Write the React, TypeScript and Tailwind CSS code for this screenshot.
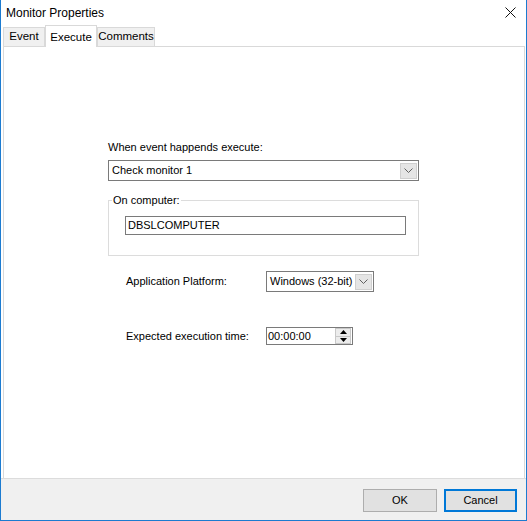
import React from 'react'

const FONT = { fontFamily: '"Liberation Sans", Arial, sans-serif' }

function Chevron() {
  return (
    <svg width="9" height="6" viewBox="0 0 9 6" fill="none" stroke="#606060" strokeWidth="1">
      <path d="M0.5 0.5L4.5 4.5L8.5 0.5" />
    </svg>
  )
}

function ComboArrow() {
  return (
    <div className="flex h-[16px] w-[17px] items-center justify-center border border-[#cfcfcf] bg-[#e5e5e5]">
      <Chevron />
    </div>
  )
}

function Combo({ value, className }: { value: string; className: string }) {
  return (
    <div className={`flex h-[21px] items-center justify-between border border-[#7a7a7a] bg-white pl-[3px] pr-[1px] ${className}`}>
      <span className="text-[11px] text-black">{value}</span>
      <ComboArrow />
    </div>
  )
}

function Tab({ label, width, active }: { label: string; width: string; active?: boolean }) {
  return active ? (
    <div className={`relative z-10 -mb-px flex h-[22px] items-start justify-center border border-b-0 border-[#d9d9d9] bg-white pt-[3px] text-[11.5px] ${width}`}>
      {label}
    </div>
  ) : (
    <div className={`mt-[2px] flex h-[19px] items-center justify-center border border-b-0 border-[#d9d9d9] bg-[#f0f0f0] text-[11.5px] ${width}`}>
      {label}
    </div>
  )
}

export default function App() {
  return (
    <div className="flex h-[521px] w-[527px] flex-col border-x border-b border-[#1c7bd0] bg-white text-black" style={FONT}>
      {/* title bar */}
      <div className="flex h-[25px] shrink-0 items-center justify-between pl-[5px] pr-[10px]">
        <span className="text-[12px]">Monitor Properties</span>
        <svg width="11" height="11" viewBox="0 0 11 11" stroke="#111" strokeWidth="1">
          <path d="M0.5 0.5L10.5 10.5M10.5 0.5L0.5 10.5" />
        </svg>
      </div>

      {/* tabs */}
      <div className="flex h-[21px] shrink-0 items-start pl-[2px]">
        <Tab label="Event" width="w-[42px]" />
        <Tab label="Execute" width="w-[52px]" active />
        <Tab label="Comments" width="w-[58px]" />
      </div>

      {/* tab page */}
      <div className="ml-[2px] mr-[1px] flex-1 border border-b-0 border-[#d9d9d9] bg-white pl-[104px]">
        <div className="mt-[94px] text-[11px] leading-[13px]">When event happends execute:</div>
        <Combo value="Check monitor 1" className="mt-[6px] w-[311px]" />

        <div className="relative mt-[19px] h-[56px] w-[311px] border border-[#dcdcdc] pl-[16px] pt-[15px]">
          <span className="absolute left-[3px] top-[-7px] bg-white px-[1px] text-[11px] leading-[13px]">On computer:</span>
          <div className="flex h-[19px] w-[281px] items-center border border-[#7a7a7a] pl-[2px] text-[11px]">DBSLCOMPUTER</div>
        </div>

        <div className="mt-[15px] grid grid-cols-[140px_auto] items-center pl-[18px]">
          <span className="text-[11px]">Application Platform:</span>
          <Combo value="Windows (32-bit)" className="w-[108px]" />
        </div>

        <div className="mt-[35px] grid grid-cols-[140px_auto] items-center pl-[18px]">
          <span className="text-[11px]">Expected execution time:</span>
          <div className="flex h-[18px] w-[87px] items-center justify-between border border-[#7a7a7a] pl-[1px] pr-[1px]">
            <span className="text-[11px]">00:00:00</span>
            <div className="flex h-[16px] w-[16px] flex-col">
              <div className="flex flex-1 items-center justify-center border border-[#c8c8c8] bg-[#ececec]">
                <svg width="7" height="4" viewBox="0 0 7 4"><path d="M3.5 0L7 4H0Z" fill="#000" /></svg>
              </div>
              <div className="flex flex-1 items-center justify-center border border-t-0 border-[#c8c8c8] bg-[#ececec]">
                <svg width="7" height="4" viewBox="0 0 7 4"><path d="M0 0H7L3.5 4Z" fill="#000" /></svg>
              </div>
            </div>
          </div>
        </div>
      </div>

      {/* button strip */}
      <div className="flex h-[42px] shrink-0 items-start justify-end gap-[7px] border-t border-[#dcdcdc] bg-[#f0f0f0] pr-[9px] pt-[10px]">
        <button className="h-[23px] w-[74px] border border-[#adadad] bg-[#e1e1e1] text-[11px]">OK</button>
        <button className="h-[23px] w-[73px] border-2 border-[#0078d7] bg-[#e1e1e1] text-[11px]">Cancel</button>
      </div>
    </div>
  )
}
